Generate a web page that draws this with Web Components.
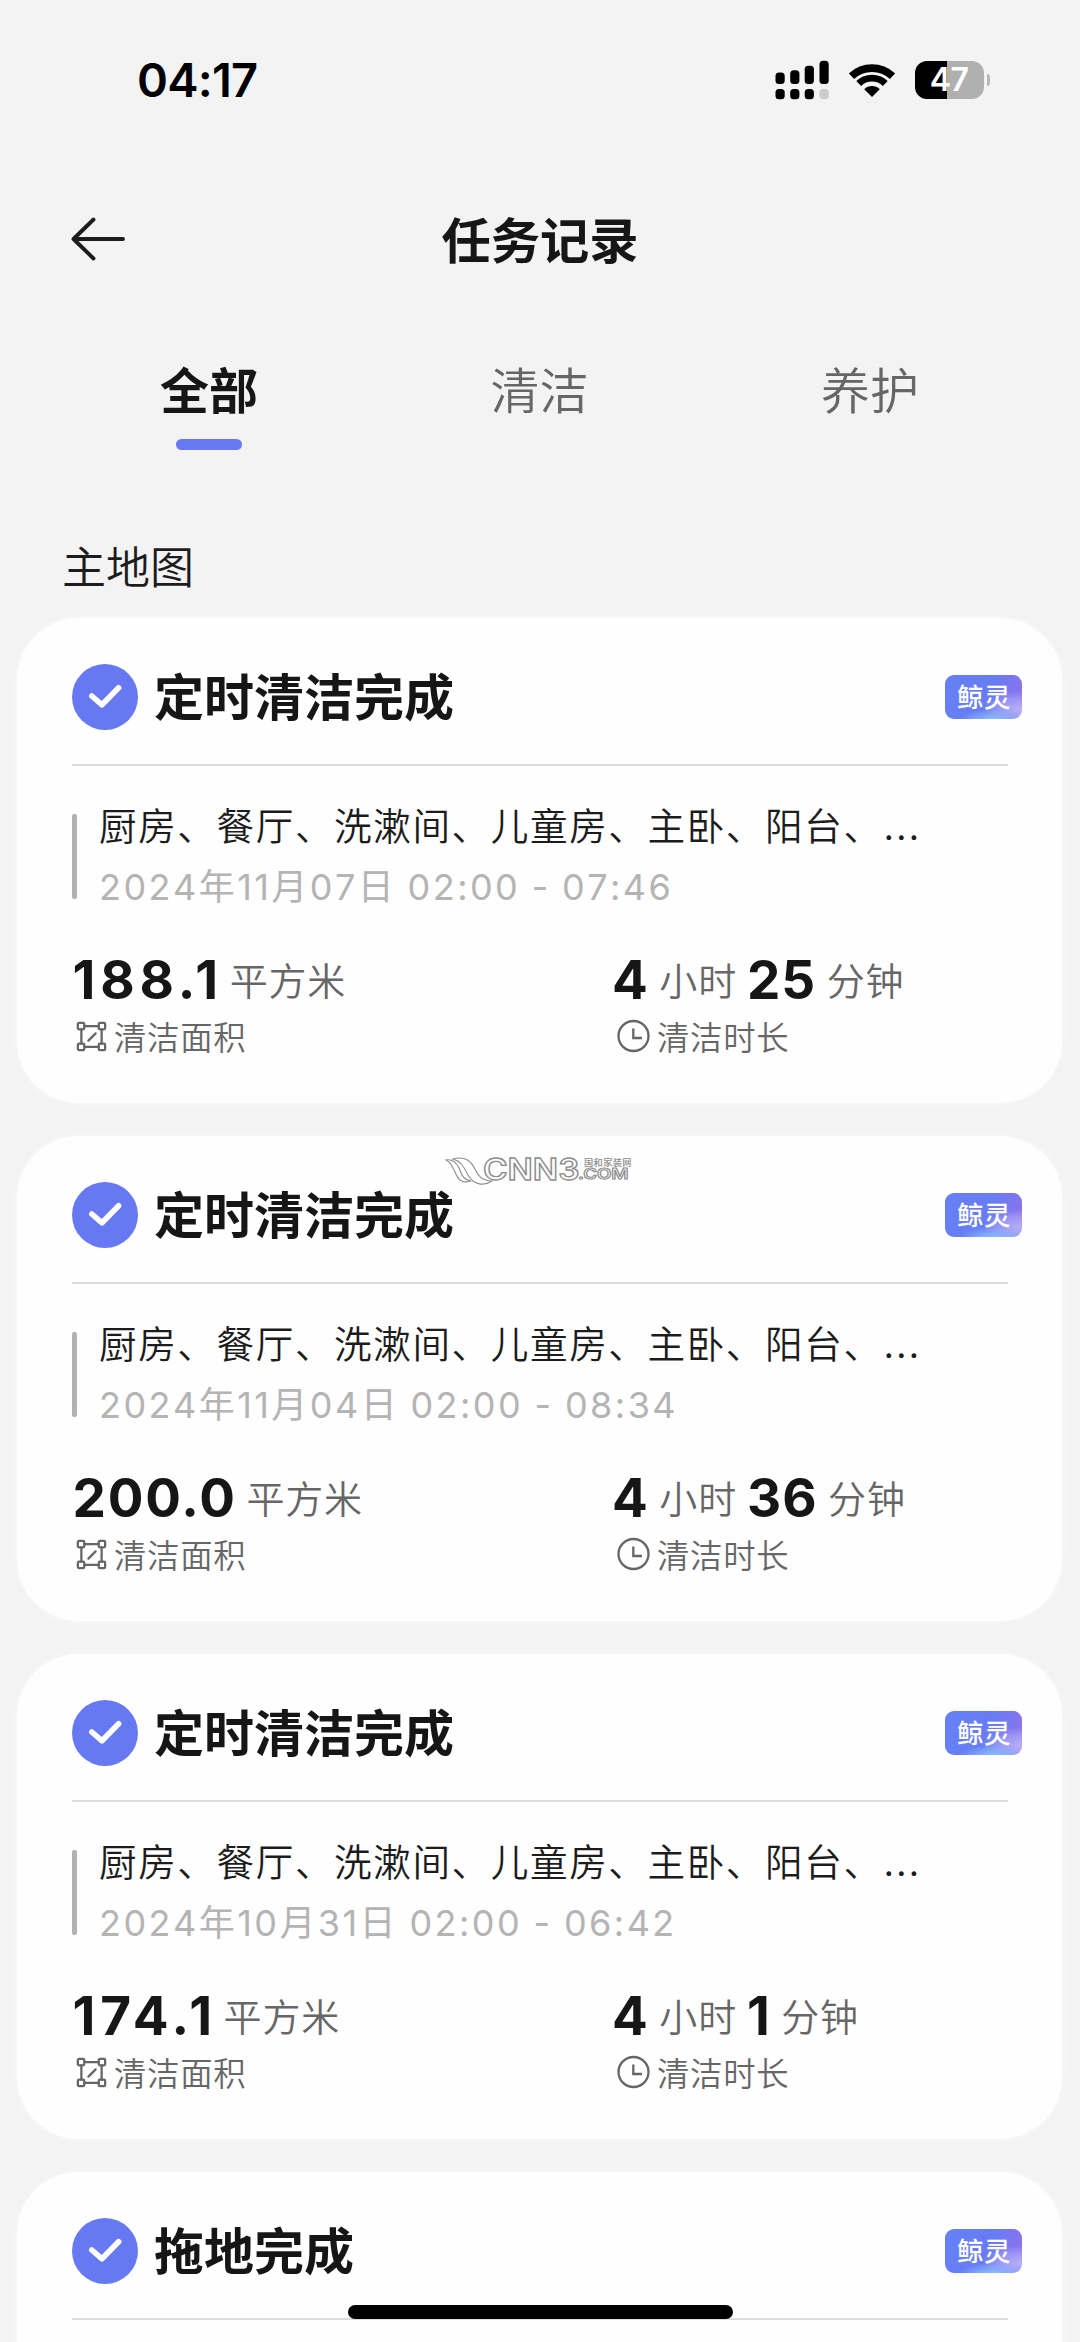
<!DOCTYPE html>
<html lang="zh-CN">
<head>
<meta charset="utf-8">
<meta name="viewport" content="width=1080">
<title>任务记录</title>
<style>
html,body{margin:0;padding:0}
body{background:#f3f3f3;width:1080px;height:2342px;overflow:hidden;font-family:Inter,"Noto Sans CJK SC",sans-serif;color:#161616}
</style>
</head>
<body>
<task-app></task-app>
<script>
const define = (name, html, setup) => {
  const tpl = document.createElement('template');
  tpl.innerHTML = '<style>*{box-sizing:border-box}svg{display:block}</style>' + html;
  customElements.define(name, class extends HTMLElement {
    connectedCallback() {
      if (this.shadowRoot) return;
      this.attachShadow({mode: 'open'}).append(tpl.content.cloneNode(true));
      if (setup) setup(this, this.shadowRoot);
    }
  });
};

define('status-bar', `
<style>
:host{display:flex;height:160px;padding:0 90px 0 137px;justify-content:space-between;align-items:center}
.time{font:600 47px/60px Inter,sans-serif;color:#000;letter-spacing:-.8px}
.icons{display:flex;align-items:center;height:40px}
.wifi{margin-left:20px}
.bat{margin-left:20px;display:flex;align-items:center;gap:3px}
.body{width:69px;height:38px;border-radius:12px;background:linear-gradient(90deg,#000 32px,#b0b0b0 32px);color:#fff;font:600 32px/38px Inter,sans-serif;text-align:center;letter-spacing:-.5px}
.cap{width:3.5px;height:12px;border-radius:0 4px 4px 0;background:#b8b8b8}
</style>
<span class="time">04:17</span>
<div class="icons">
 <svg width="54" height="40" viewBox="774.5 60 54 40"><g fill="#000"><rect x="775" y="72.5" width="9.2" height="11.5" rx="3.5"/><rect x="789.7" y="70.3" width="9.2" height="13.7" rx="3.5"/><rect x="804.2" y="65.8" width="9.2" height="18.2" rx="3.5"/><rect x="819" y="60.8" width="9.2" height="23.2" rx="3.5"/><rect x="775" y="89" width="9.2" height="10.2" rx="3.5"/><rect x="789.7" y="89" width="9.2" height="10.2" rx="3.5"/><rect x="804.2" y="89" width="9.2" height="10.2" rx="3.5"/></g><rect x="819" y="89" width="9.2" height="10.2" rx="3.5" fill="#ccc"/></svg>
 <svg class="wifi" width="46" height="40" viewBox="848.5 60 46 40"><g fill="none" stroke="#000"><path d="M851 76.2A30 30 0 0 1 892 76.2" stroke-width="7.6"/><path d="M858.2 83.5A19.2 19.2 0 0 1 884.8 83.5" stroke-width="6.8"/></g><path d="M871.5 97L863.7 89.2A11 11 0 0 1 879.3 89.2Z"/></svg>
 <div class="bat"><div class="body">47</div><div class="cap"></div></div>
</div>`);

define('nav-bar', `
<style>
:host{display:grid;grid-template-columns:200px 1fr 200px;align-items:center;height:160px}
svg{margin:0 0 2px 70px}
h1{margin:0 0 5px;text-align:center;font:700 49.3px/72px "Noto Sans CJK SC",sans-serif;color:#161616}
</style>
<svg width="56" height="46" viewBox="0 0 56 46" fill="none" stroke="#1c1c1c" stroke-width="3.9" stroke-linecap="round" stroke-linejoin="round"><path d="M53 23H3.5M23.5 3.5L3.5 23L23.5 42.5"/></svg>
<h1><slot></slot></h1>`);

define('tab-item', `
<style>
:host{display:flex;flex-direction:column;align-items:center;width:100px;font:350 49px/72px "Noto Sans CJK SC",sans-serif;color:#666}
:host([active]){font-weight:700;color:#161616}
i{display:none;width:66px;height:11px;border-radius:6px;background:#6679f2;margin-top:15px}
:host([active]) i{display:block}
</style><span><slot></slot></span><i></i>`);

define('tab-strip', `
<style>:host{display:flex;justify-content:space-between;padding:32px 160px 0 159px;height:200px}</style><slot></slot>`);

define('map-title', `
<style>:host{display:block;padding:13px 62px 0;height:98px;font:350 44px/64px "Noto Sans CJK SC",sans-serif;color:#1c1c1c}</style><slot></slot>`);

define('whale-badge', `
<style>:host{display:block;width:77px;height:44px;border-radius:9px;padding-left:1px;text-align:center;color:#fff;font:500 26.5px/42px "Noto Sans CJK SC",sans-serif;letter-spacing:.5px;
background:radial-gradient(ellipse 34px 13px at 62% 106%,#84d2ff 0,#86b4ffcc 45%,#86b4ff00 100%),radial-gradient(ellipse 38px 18px at 98% 78%,#b5b0f8 0,#a9a2f6aa 60%,#a59cf500 100%),linear-gradient(100deg,#6580f6 0%,#687cf4 60%,#7e76ee 85%,#9672e6 100%)}
</style><slot></slot>`);

define('check-mark', `
<style>:host{display:block}</style>
<svg width="66" height="66" viewBox="0 0 66 66"><circle cx="33" cy="33" r="33" fill="#6679f2"/><path d="M19.8 32L30 40.8L46.6 23.8" fill="none" stroke="#fff" stroke-width="5.6" stroke-linecap="round" stroke-linejoin="round"/></svg>`);

define('area-icon', `
<style>:host{display:block}</style>
<svg width="31" height="31" viewBox="0 0 30 30" fill="none" stroke="#666" stroke-width="2.2" stroke-linecap="round"><path d="M8 5H22M8 25H22M5.2 8V22M24.8 8V22M12 19L19 12"/><rect x="1.8" y="1.8" width="6.2" height="6.2" rx="1.2"/><rect x="22" y="1.8" width="6.2" height="6.2" rx="1.2"/><rect x="1.8" y="22" width="6.2" height="6.2" rx="1.2"/><rect x="22" y="22" width="6.2" height="6.2" rx="1.2"/></svg>`);

define('clock-icon', `
<style>:host{display:block}</style>
<svg width="34" height="34" viewBox="0 0 34 34" fill="none" stroke="#666" stroke-width="2.3"><circle cx="16.5" cy="17" r="15"/><path d="M16.3 9.5V19H25"/></svg>`);

define('stat-value', `
<style>:host{display:block;height:64px;line-height:60px;white-space:nowrap}
b{font:700 53px/60px Inter,sans-serif;letter-spacing:var(--track,1px);color:#161616}
span{font:350 38px/34px "Noto Sans CJK SC",sans-serif;letter-spacing:.8px;color:#666;vertical-align:4px;margin:0 10px 0 calc(11.5px - var(--track,1px))}
</style>`, (host, root) => {
  (host.getAttribute('parts') || '').split(' ').filter(Boolean).forEach((p, i) => {
    const el = document.createElement(i % 2 ? 'span' : 'b');
    el.textContent = p;
    root.append(el);
  });
});

define('stat-label', `
<style>:host{display:flex;align-items:center;height:44px;font:350 32.4px/44px "Noto Sans CJK SC",sans-serif;letter-spacing:.7px;color:#666}</style>
<slot name="icon"></slot><span><slot></slot></span>`);

define('task-card', `
<style>
:host{display:block;width:1045px;height:485px;flex:none;margin-left:17px;background:#fefefe;border-radius:62px;padding:46px 54px 0 55px;box-shadow:0 0 5px #fafafa}
header{display:flex;align-items:center;height:66px;margin:0 -14px 0 -.5px}
h2{margin:0 auto 6px 16.5px;font:700 50px/72px "Noto Sans CJK SC",sans-serif;color:#161616}
hr{margin:34px 0 0;border:0;height:2px;background:#ddd}
.info{display:flex;margin-top:38px;height:114px}
.bar{width:5px;height:85px;margin-top:10px;border-radius:2px;background:#b2b2b2}
.txt{margin:-8px 0 0 22px}
.rooms{height:60px;white-space:nowrap;font:350 37.6px/56px "Noto Sans CJK SC",sans-serif;letter-spacing:1.6px;color:#1c1c1c}
.rooms span{font:300 44.5px/30px Inter,sans-serif}
.date{height:62px;white-space:nowrap;font:380 36px/62px Inter,"Noto Sans CJK SC",sans-serif;letter-spacing:2.45px;word-spacing:-1.2px;font-kerning:none;font-feature-settings:"calt" 0;color:#b4b4b4}
.stats{display:grid;grid-template-columns:540px 1fr;margin-top:32px}
.wide{--track:4.8px}
.even{--track:1.8px}
.even,.wide{padding-left:.5px}
area-icon{margin:0 7px 0 4px}
clock-icon{margin:0 6px 0 5px}
</style>
<header><check-mark></check-mark><h2></h2><whale-badge>鲸灵</whale-badge></header>
<hr>
<div class="info"><div class="bar"></div><div class="txt"><div class="rooms">厨房、餐厅、洗漱间、儿童房、主卧、阳台、<span>…</span></div><div class="date"></div></div></div>
<div class="stats">
 <div><div class="a"></div><stat-label><area-icon slot="icon"></area-icon>清洁面积</stat-label></div>
 <div><div class="t"></div><stat-label><clock-icon slot="icon"></clock-icon>清洁时长</stat-label></div>
</div>`, (host, root) => {
  const q = s => root.querySelector(s);
  q('h2').textContent = host.getAttribute('name');
  if (!host.hasAttribute('date')) { q('.info').remove(); q('.stats').remove(); return; }
  q('.date').textContent = host.getAttribute('date');
  const fill = (sel, parts, cls) => {
    const el = document.createElement('stat-value');
    el.className = cls;
    el.setAttribute('parts', parts);
    q(sel).replaceWith(el);
  };
  const area = host.getAttribute('area');
  fill('.a', area + ' 平方米', area.startsWith('1') ? 'wide' : 'even');
  fill('.t', host.getAttribute('time'), 'time');
});

define('site-mark', `
<style>
:host{position:absolute;left:445px;top:1156px;display:flex;width:190px;height:30px}
svg{flex:none;margin-right:-10px}
.n{font:600 29.5px/27px Inter,sans-serif;width:95px;color:#fff;-webkit-text-stroke:1.3px #8c8c8c;white-space:nowrap}
.n span,.c span{display:inline-block;transform-origin:0 50%}
.n span{transform:scaleX(1.13)}
.r{width:55px}
.z{font:500 9.2px/10px "Noto Sans CJK SC",sans-serif;letter-spacing:.4px;color:#8c8c8c;white-space:nowrap;padding:1px 0 0 6px}
.c{font:600 14.5px/14px Inter,sans-serif;color:#fff;-webkit-text-stroke:1px #8c8c8c}
.c span{transform:scaleX(1.29)}
</style>
<svg width="48" height="30" viewBox="0 0 48 30" fill="#fff" stroke="#8c8c8c" stroke-width="1.1"><path d="M1 4C7 3 11 6 14 12C17 20 19 24 26 25C16 28 13 23 10 16C7 9 5 6 1 4Z"/><path d="M8 3C19 0 25 4 29 11C33 20 37 25 47 25C38 31 28 28 23 19C18 9 15 5 8 3Z"/></svg>
<div class="n"><span>CNN3</span></div><div class="r"><div class="z">国和家装网</div><div class="c"><span>.COM</span></div></div>`);

define('home-bar', `
<style>:host{position:absolute;left:348px;top:2305px;width:385px;height:14px;border-radius:7px;background:#000}</style>`);

define('task-app', `
<style>
:host{display:block;position:relative;width:1080px;height:2342px;overflow:hidden;background:#f3f3f3}
.list{display:flex;flex-direction:column;gap:33px}
</style>
<status-bar></status-bar>
<nav-bar>任务记录</nav-bar>
<tab-strip><tab-item active>全部</tab-item><tab-item>清洁</tab-item><tab-item>养护</tab-item></tab-strip>
<map-title>主地图</map-title>
<div class="list">
<task-card name="定时清洁完成" date="2024年11月07日 02:00 - 07:46" area="188.1" time="4 小时 25 分钟"></task-card>
<task-card name="定时清洁完成" date="2024年11月04日 02:00 - 08:34" area="200.0" time="4 小时 36 分钟"></task-card>
<task-card name="定时清洁完成" date="2024年10月31日 02:00 - 06:42" area="174.1" time="4 小时 1 分钟"></task-card>
<task-card name="拖地完成"></task-card>
</div>
<site-mark></site-mark>
<home-bar></home-bar>`);
</script>
</body>
</html>
